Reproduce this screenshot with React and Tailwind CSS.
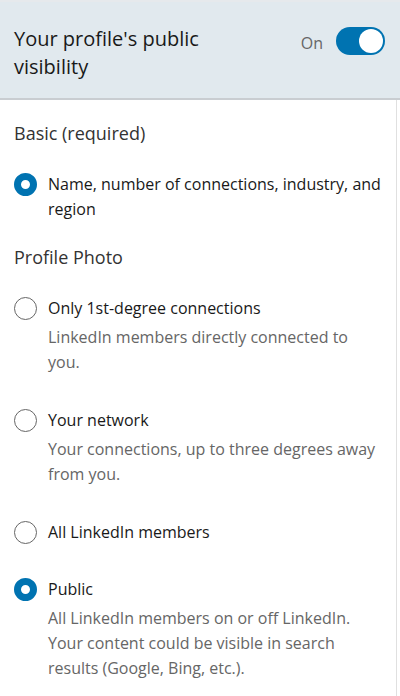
import React, { useState } from 'react';

const options = [
  {
    id: 'first',
    label: 'Only 1st-degree connections',
    desc: 'LinkedIn members directly connected to you.',
  },
  {
    id: 'network',
    label: 'Your network',
    desc: 'Your connections, up to three degrees away from you.',
  },
  { id: 'members', label: 'All LinkedIn members' },
  {
    id: 'public',
    label: 'Public',
    desc: 'All LinkedIn members on or off LinkedIn. Your content could be visible in search results (Google, Bing, etc.).',
  },
];

const Radio = ({ checked }) => (
  <span
    className={`mt-[1px] block h-[23px] w-[23px] shrink-0 rounded-full ${
      checked ? 'border-[7px] border-[#0073b1] bg-white' : 'border-[1.5px] border-[#666666] bg-white'
    }`}
  />
);

const App = () => {
  const [visible, setVisible] = useState(true);
  const [photo, setPhoto] = useState('public');

  return (
    <div className="w-[400px] min-h-[696px] bg-white text-[#191919]" style={{ fontFamily: '"Open Sans", "Noto Sans", sans-serif' }}>
      <div className="border-t-2 border-[#e6e9ec]" />
      <div className="flex items-start justify-between border-b-2 border-[#c9cdd1] bg-[#e1e9ee] pl-[14px] pr-[15px] pt-[23px] pb-[17px]">
        <h1 className="w-[230px] text-[20px] leading-[28px] text-[#191919]">Your profile's public visibility</h1>
        <div className="flex items-center gap-[13px] pt-[2px]">
          <span className="text-[16px] text-[#666666] pt-[4px]">On</span>
          <button
            onClick={() => setVisible(!visible)}
            className={`flex h-[28px] w-[49px] items-center rounded-full px-[2px] ${
              visible ? 'justify-end bg-[#0073b1]' : 'justify-start bg-[#86888a]'
            }`}
          >
            <span className="block h-[24px] w-[24px] rounded-full bg-white" />
          </button>
        </div>
      </div>

      <div className="mr-[3px] border-r border-[#e0e0e0] px-[14px] pt-[21px] pb-[20px]">
        <h2 className="text-[18px] leading-[24px] text-[#333333]">Basic (required)</h2>

        <div className="mt-[27px] flex gap-[11px]">
          <Radio checked />
          <p className="text-[16px] leading-[25px]">Name, number of connections, industry, and region</p>
        </div>

        <h2 className="mt-[23px] text-[18px] leading-[24px] text-[#333333]">Profile Photo</h2>

        <div className="mt-[27px] flex flex-col gap-[33px]">
          {options.map((o) => (
            <label key={o.id} className="flex cursor-pointer gap-[11px]" onClick={() => setPhoto(o.id)}>
              <Radio checked={photo === o.id} />
              <div>
                <div className="text-[16px] leading-[24px]">{o.label}</div>
                {o.desc && <p className="mt-[5px] text-[16px] leading-[25px] text-[#666666]">{o.desc}</p>}
              </div>
            </label>
          ))}
        </div>
      </div>
    </div>
  );
};

export default App;
